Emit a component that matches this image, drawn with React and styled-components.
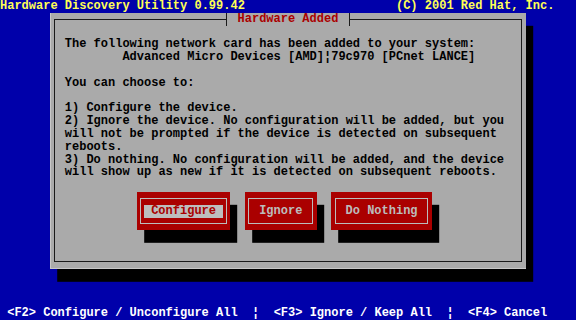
import React from 'react';
import styled, { createGlobalStyle } from 'styled-components';

// text-mode grid: 80 x 25 cells on a 576 x 320 screen
const CW = 7.2;
const RH = 12.8;

const GlobalStyle = createGlobalStyle`
  html, body {
    margin: 0;
    padding: 0;
    background: #0000aa;
    overflow: hidden;
  }
`;

const Screen = styled.div`
  width: 576px;
  height: 320px;
  display: flex;
  flex-direction: column;
  background: #0000aa;
  font-family: "Liberation Mono", "DejaVu Sans Mono", monospace;
  font-size: 12px;
  font-weight: bold;
  line-height: ${RH}px;
  white-space: pre;
`;

const TopBar = styled.div`
  height: ${RH}px;
  display: flex;
  justify-content: space-between;
  padding-right: ${CW * 3}px;
  color: #ffff55;
`;

const Desk = styled.div`
  flex: 1;
  display: flex;
  align-items: flex-start;
  padding-left: ${CW * 7}px;
`;

const Window = styled.div`
  width: ${CW * 66}px;
  height: ${RH * 20}px;
  box-sizing: border-box;
  padding: ${RH / 2}px ${CW / 2}px;
  display: flex;
  background: #aaaaaa;
  box-shadow: inset 1px 0 0 #c8c8c8, inset 0 -1px 0 #c8c8c8, ${CW}px ${RH}px 0 #000;
`;

const Frame = styled.div`
  flex: 1;
  display: flex;
  flex-direction: column;
  border: 1px solid #1a1a1a;
  padding-left: 9.8px;
  color: #000;
`;

const Title = styled.div`
  align-self: center;
  height: ${RH}px;
  margin-top: -${RH / 2 + 1}px;
  margin-left: -9.8px;
  padding: 0 10.3px;
  border-left: 1px solid #1a1a1a;
  border-right: 1px solid #1a1a1a;
  background: #aaaaaa;
  color: #aa0000;
`;

const Para = styled.div`
  margin-top: ${(p) => p.$skip * RH}px;
`;

const Line = styled.div`
  height: ${RH}px;
  padding-left: ${(p) => (p.$indent || 0) * CW}px;
`;

const ButtonRow = styled.div`
  display: flex;
  gap: ${CW * 2}px;
  margin-top: ${RH}px;
  padding-left: 72px;
`;

const Button = styled.div`
  width: ${(p) => p.$cols * CW}px;
  height: ${RH * 3}px;
  box-sizing: border-box;
  padding: ${RH / 2}px ${CW / 2}px;
  display: flex;
  background: #aa0000;
  box-shadow: ${CW}px ${RH}px 0 #000;
`;

const ButtonBox = styled.div`
  flex: 1;
  display: flex;
  align-items: center;
  justify-content: center;
  border: 1px solid #bcbcbc;
`;

const ButtonLabel = styled.span`
  height: ${RH}px;
  padding: 0 ${CW}px;
  background: ${(p) => (p.$focused ? '#bdbdbd' : 'transparent')};
  color: ${(p) => (p.$focused ? '#aa0000' : '#bcbcbc')};
`;

const HelpBar = styled.div`
  height: ${RH}px;
  padding-left: ${CW}px;
  color: #ffffff;
`;

const buttons = [
  { label: 'Configure', cols: 13, focused: true },
  { label: 'Ignore', cols: 10 },
  { label: 'Do Nothing', cols: 14 },
];

export default function App() {
  return (
    <Screen>
      <GlobalStyle />
      <TopBar>
        <span>Hardware Discovery Utility 0.99.42</span>
        <span>(C) 2001 Red Hat, Inc.</span>
      </TopBar>
      <Desk>
        <Window>
          <Frame>
            <Title>Hardware Added</Title>
            <Para $skip={1}>
              <Line>The following network card has been added to your system:</Line>
              <Line $indent={8}>Advanced Micro Devices [AMD]¦79c970 [PCnet LANCE]</Line>
            </Para>
            <Para $skip={1}>
              <Line>You can choose to:</Line>
            </Para>
            <Para $skip={1}>
              <Line>1) Configure the device.</Line>
              <Line>2) Ignore the device. No configuration will be added, but you</Line>
              <Line>will not be prompted if the device is detected on subsequent</Line>
              <Line>reboots.</Line>
              <Line>3) Do nothing. No configuration will be added, and the device</Line>
              <Line>will show up as new if it is detected on subsequent reboots.</Line>
            </Para>
            <ButtonRow>
              {buttons.map((b) => (
                <Button key={b.label} $cols={b.cols}>
                  <ButtonBox>
                    <ButtonLabel $focused={b.focused}>{b.label}</ButtonLabel>
                  </ButtonBox>
                </Button>
              ))}
            </ButtonRow>
          </Frame>
        </Window>
      </Desk>
      <HelpBar>{'<F2> Configure / Unconfigure All  ¦  <F3> Ignore / Keep All  ¦  <F4> Cancel'}</HelpBar>
    </Screen>
  );
}
